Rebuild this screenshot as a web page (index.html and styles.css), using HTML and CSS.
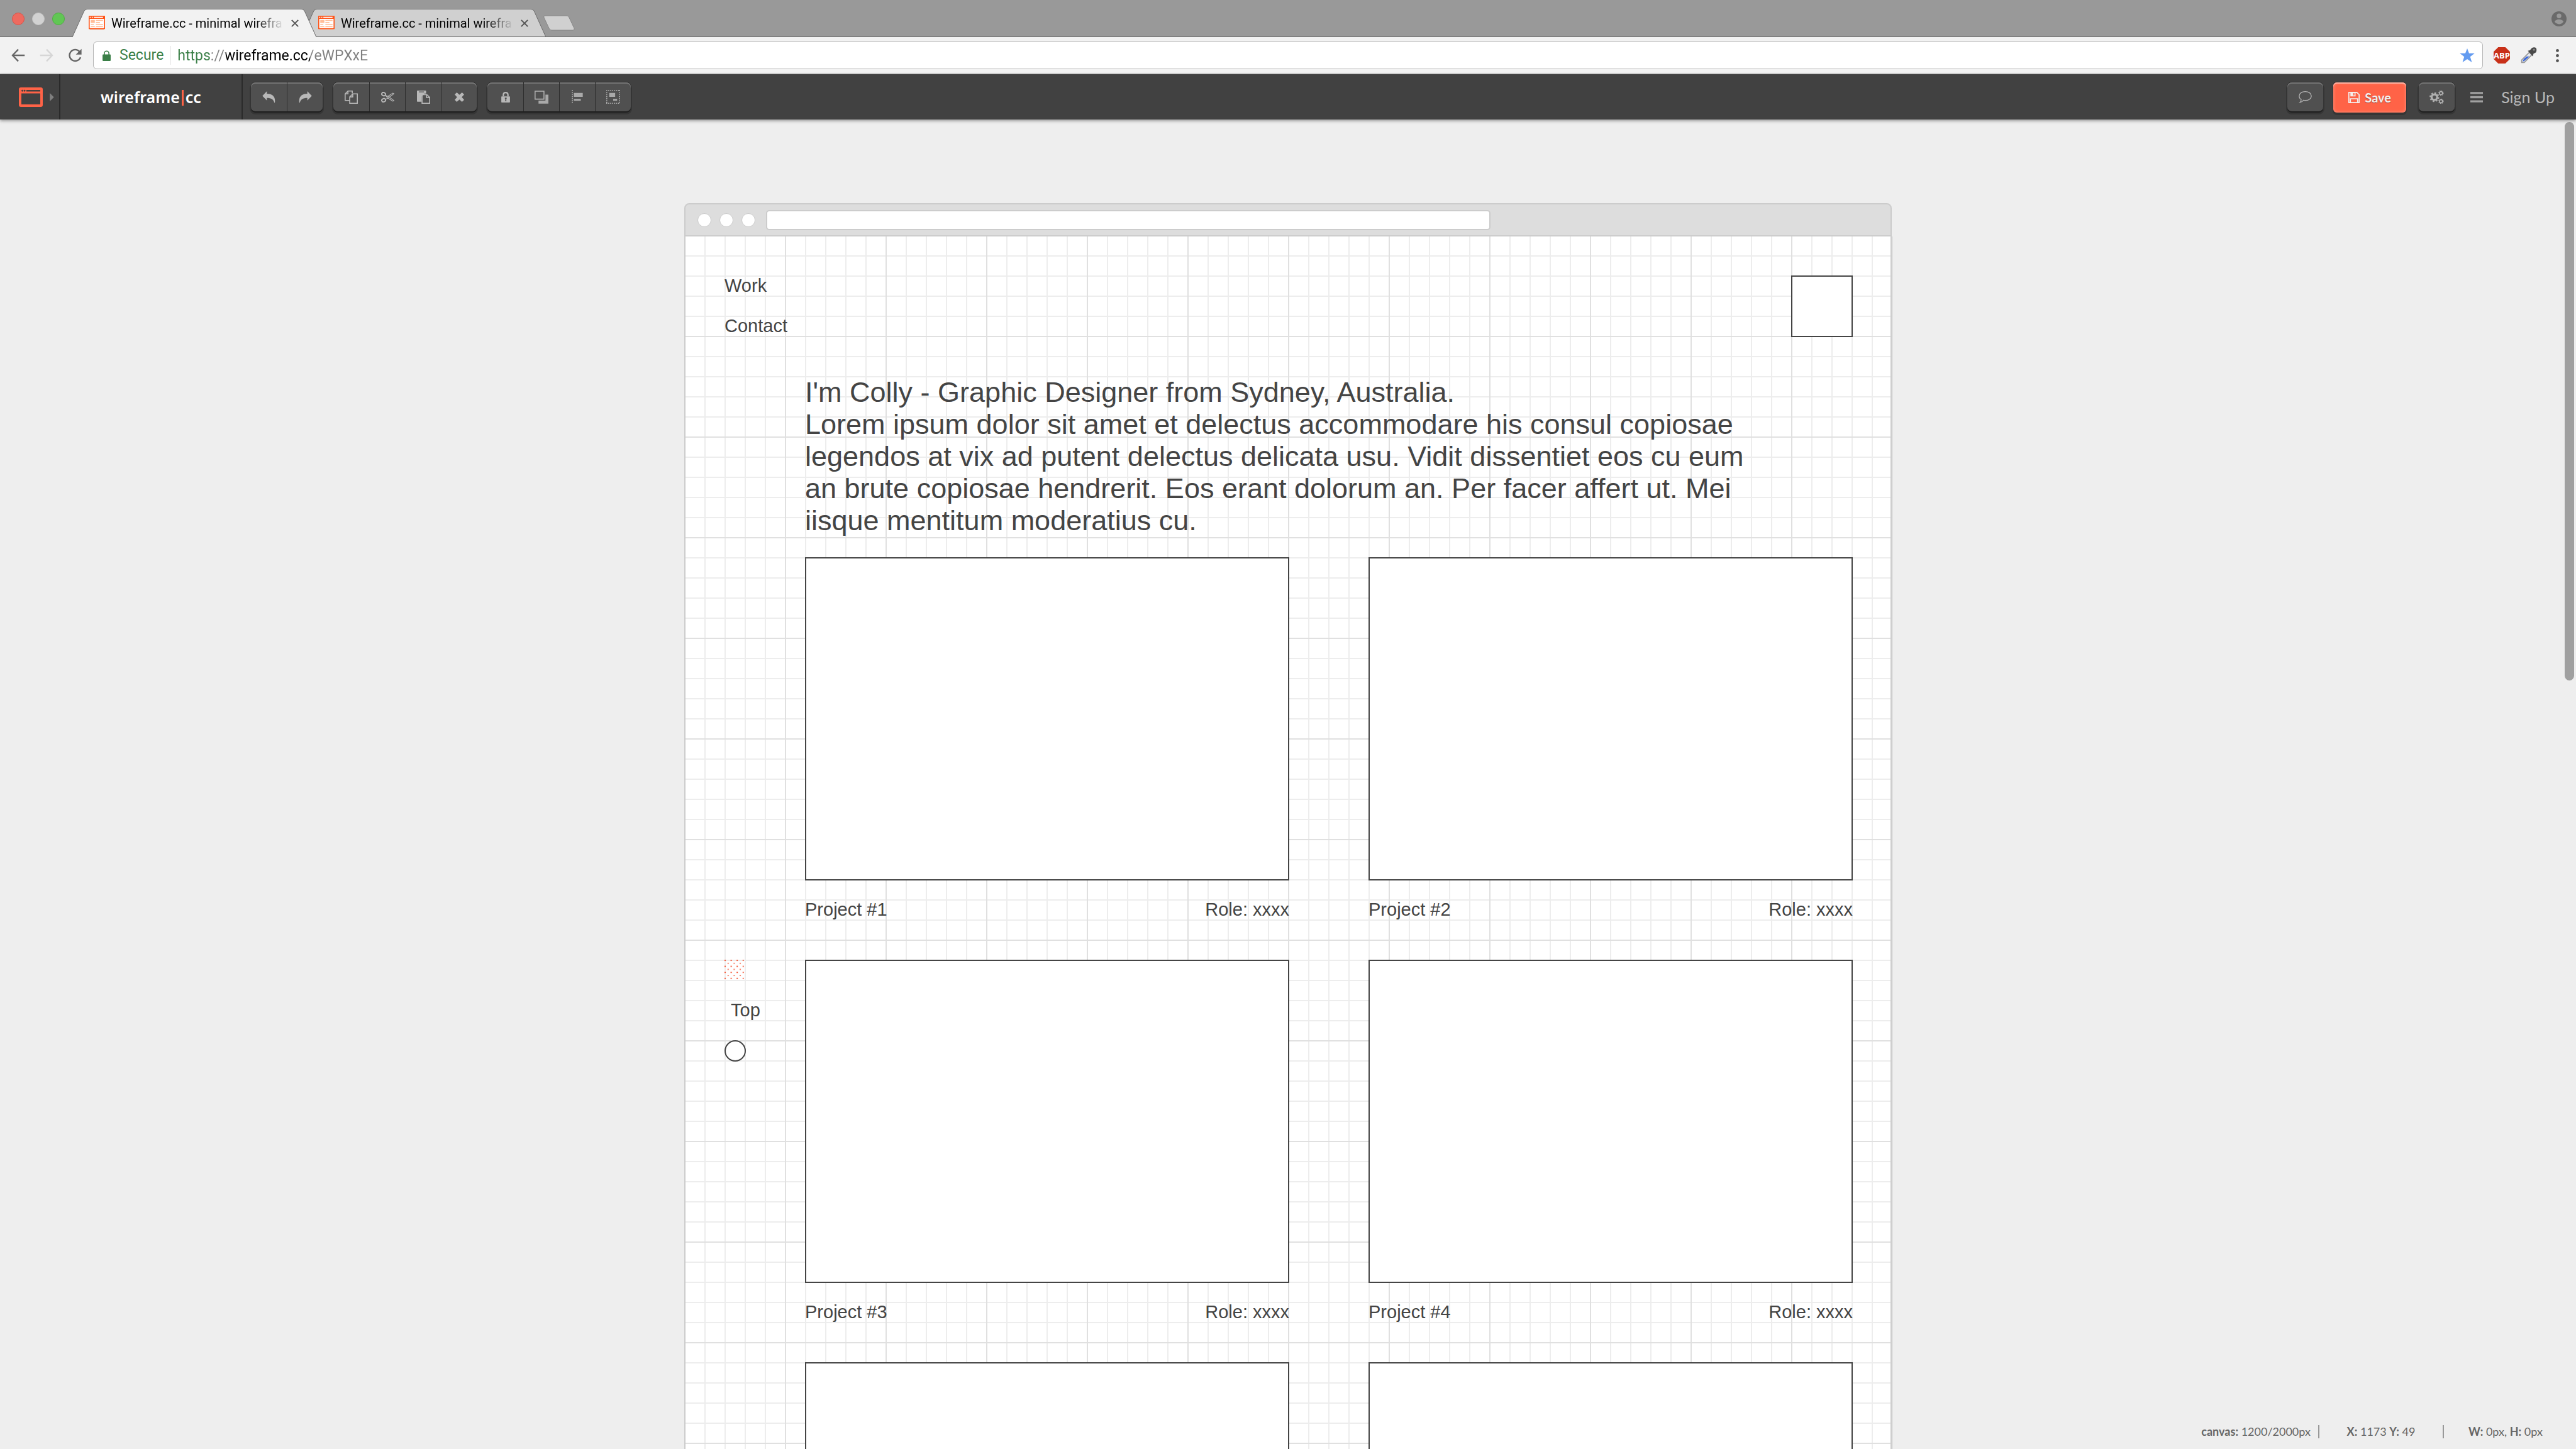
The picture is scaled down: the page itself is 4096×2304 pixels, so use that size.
FILE: index.html
```html
<!DOCTYPE html>
<html lang="en">
<head>
<meta charset="utf-8">
<title>Wireframe.cc</title>
<link rel="stylesheet" href="styles.css">
</head>
<body>
<svg class="defs" aria-hidden="true">
  <symbol id="favicon" viewBox="0 0 32 28">
    <path fill="#e3b9a6" d="M2 26h28v2H2z"/>
    <path fill="#ff5316" d="M0 0h32v26H0z"/>
    <path fill="#fff" d="M2 2h2v2H2zM6 2h2v2H6zM10 2h18v2H10zM2 6h28v18H2z"/>
    <path fill="#ffbd98" d="M4 8h8v6H4zM14 8h14v2H14zM14 12h8v2h-8zM4 16h6v2H4zM14 16h14v2H14zM4 20h8v2H4zM14 20h14v2H14z"/>
  </symbol>
  <symbol id="close" viewBox="0 0 14 14">
    <path d="M1 1l12 12M13 1L1 13" stroke="#555" stroke-width="2.4" fill="none"/>
  </symbol>
</svg>

<header class="browser">
  <div class="tabstrip">
    <div class="lights"><i class="light red"></i><i class="light"></i><i class="light green"></i></div>
    <nav class="tabs">
      <div class="tab active">
        <svg class="tab-shape" viewBox="0 0 388 45" preserveAspectRatio="none"><path d="M0 45L19 3Q21 .5 24 .5H364Q367 .5 369 3L388 45"/></svg>
        <svg class="tab-icon"><use href="#favicon"/></svg>
        <span class="tab-title">Wireframe.cc - minimal wirefra</span>
        <button class="tab-close" aria-label="Close tab"><svg><use href="#close"/></svg></button>
      </div>
      <div class="tab">
        <svg class="tab-shape" viewBox="0 0 388 45" preserveAspectRatio="none"><path d="M0 45L19 3Q21 .5 24 .5H364Q367 .5 369 3L388 45"/></svg>
        <svg class="tab-icon"><use href="#favicon"/></svg>
        <span class="tab-title">Wireframe.cc - minimal wirefra</span>
        <button class="tab-close" aria-label="Close tab"><svg><use href="#close"/></svg></button>
      </div>
      <button class="new-tab" aria-label="New tab"><svg viewBox="0 0 52 26"><path d="M3 1H38Q41 1 42 4L50 21Q51 24 48 24H14Q11 24 10 21L2 4Q1 1 3 1Z" fill="#d0d0d0" stroke="#868686"/></svg></button>
    </nav>
    <button class="profile" aria-label="Profile"><svg viewBox="0 0 30 30"><circle cx="15" cy="15" r="15" fill="#6a6a6a"/><circle cx="15" cy="9" r="4.600" fill="#999"/><path d="M6 20.500Q9 16 15 16T24 20.500Q20 25.500 15 25.500T6 20.500Z" fill="#999"/></svg></button>
  </div>
  <div class="navbar">
    <div class="nav-buttons">
      <button aria-label="Back"><svg viewBox="0 0 28 28"><path d="M27 14H3M14 2L2.500 14L14 26" fill="none" stroke="#666" stroke-width="3"/></svg></button>
      <button aria-label="Forward"><svg viewBox="0 0 28 28"><path d="M1 14H25M14 2L25.500 14L14 26" fill="none" stroke="#d6d6d6" stroke-width="3"/></svg></button>
      <button aria-label="Reload"><svg viewBox="0 0 28 28"><path d="M23.500 6.500A11.500 11.500 0 1 0 25.500 18" fill="none" stroke="#666" stroke-width="3"/><path d="M27.500 1V12.500H16Z" fill="#666"/></svg></button>
    </div>
    <form class="address">
      <svg class="padlock" viewBox="0 0 16 21"><path d="M3.500 9V6a4.500 4.500 0 0 1 9 0V9" fill="none" stroke="#3a7f47" stroke-width="2"/><rect y="8" width="16" height="13" rx="1.500" fill="#3a7f47"/></svg>
      <label class="secure" for="url">Secure</label>
      <input id="url" class="url" type="text" value="https://wireframe.cc/eWPXxE">
      <svg class="star" viewBox="0 0 30 28"><path d="M15 0L18.800 10H30L21 17L24.500 28L15 21.500L5.500 28L9 17L0 10H11.200Z" fill="#639bf0"/></svg>
    </form>
    <div class="extensions">
      <button class="abp"><svg viewBox="0 0 32 32" aria-hidden="true"><path d="M9 0H23L32 9V23L23 32H9L0 23V9Z" fill="#c83018"/></svg><span>ABP</span></button>
      <button aria-label="Color picker"><svg class="dropper" viewBox="0 0 32 32"><path d="M2 30V25L17 10L22 15L7 30Z" fill="#e4e7ee" stroke="#999" stroke-width="2"/><path d="M4 28L6 23L12 18H17L7 27Z" fill="#3864d8"/><path d="M14 7L18 6L22 1.500Q27-1 30.500 2Q32 6 30 10L25 13L24 18Z" fill="#4a4a4a"/><circle cx="26" cy="5" r="2" fill="#8a8a8a"/></svg></button>
      <button aria-label="Menu"><svg class="dots" viewBox="0 0 6 26"><g fill="#555"><circle cx="3" cy="3" r="3"/><circle cx="3" cy="13" r="3"/><circle cx="3" cy="23" r="3"/></g></svg></button>
    </div>
  </div>
</header>

<div class="toolbar">
  <button class="device" aria-label="Choose frame">
    <svg class="device-icon" viewBox="0 0 48 39"><path fill="#ff6347" fill-rule="evenodd" d="M4 0H44Q48 0 48 4V35Q48 39 44 39H4Q0 39 0 35V4Q0 0 4 0ZM5 12V34H43V12ZM15 5V8H43V5Z"/><circle cx="7" cy="6.500" r="1.800" fill="#414141"/><circle cx="11.500" cy="6.500" r="1.800" fill="#414141"/></svg>
    <svg class="device-arrow" viewBox="0 0 8 16"><path d="M0 0L8 8L0 16Z" fill="#808080"/></svg>
  </button>
  <a class="brand" href="#">wireframe<i></i>cc</a>
  <div class="tools">
    <div class="group">
      <button aria-label="Undo"><svg width="21" height="19" viewBox="0 0 26 24"><path d="M0 9.500L9 0V5C19 5 27 10 25 23H24C22 16 18 13.500 9 13.500V18.500Z"/></svg></button>
      <button aria-label="Redo"><svg width="21" height="19" viewBox="0 0 26 24"><path d="M26 9.500L17 0V5C7 5-1 10 1 23H2C4 16 8 13.500 17 13.500V18.500Z"/></svg></button>
    </div>
    <div class="group">
      <button aria-label="Copy"><svg width="21" height="21" viewBox="0 0 26 26"><g fill="none" stroke="#b8b8b8" stroke-width="2"><path d="M10 19.500H1V6.500L6.500 1H15V5.500M6.500 1V6.500H1"/><path d="M16 6.500H25V25H10V12.500ZM16 6.500V12.500H10"/></g></svg></button>
      <button aria-label="Cut"><svg width="21" height="17" viewBox="0 0 26 21"><g fill="none" stroke="#b8b8b8"><ellipse cx="5" cy="4.500" rx="3.800" ry="3.200" transform="rotate(25 5 4.500)" stroke-width="2.400"/><ellipse cx="5" cy="16.500" rx="3.800" ry="3.200" transform="rotate(-25 5 16.500)" stroke-width="2.400"/><path stroke-width="1.400" d="M8 6.500L13 9L23 2.500L25.500 3.500L14 12L8 15M8 6.500L13 12L23 18.500L25.500 17.500L14 9"/></g></svg></button>
      <button aria-label="Paste"><svg width="21" height="21" viewBox="0 0 26 26"><path fill-rule="evenodd" d="M1 0H17Q18 0 18 1V6H15L9 12V22H1Q0 22 0 21V1Q0 0 1 0ZM4 2V3.500H14V2Z"/><path d="M16 8H19.500L25 13.500V25H10V8ZM19 8V14H25" fill="none" stroke="#b8b8b8" stroke-width="2"/></svg></button>
      <button aria-label="Delete"><svg width="15" height="15" viewBox="0 0 18 18"><path d="M4 0L9 4.500L14 0L18 4L13.500 9L18 14L14 18L9 13.500L4 18L0 14L4.500 9L0 4Z"/></svg></button>
    </div>
    <div class="group">
      <button aria-label="Lock"><svg width="14" height="17" viewBox="0 0 17 21"><path d="M4 9V6Q4 1.500 8.500 1.500T13 6V9" fill="none" stroke="#b8b8b8" stroke-width="2.800"/><path fill-rule="evenodd" d="M1 9H16Q17 9 17 10V20Q17 21 16 21H1Q0 21 0 20V10Q0 9 1 9ZM7 11.500V14L8 15V16.500L7 18.500H10.500L9.500 16.500V15L10.500 14V11.500Z"/></svg></button>
      <button aria-label="Arrange"><svg width="22" height="21" viewBox="0 0 28 26"><path d="M22 8H28V26H8V20H22Z" fill="#a9a9a9"/><path d="M1 1H19V17H1Z" fill="none" stroke="#b0b0b0" stroke-width="2"/></svg></button>
      <button aria-label="Align"><svg width="18" height="22" viewBox="0 0 22 28"><path d="M1 0V28" stroke="#b0b0b0" stroke-width="2" stroke-dasharray="2"/><path fill="#a9a9a9" d="M4 6H22V14H4ZM4 18H18V22H4Z"/></svg></button>
      <button aria-label="Group"><svg width="22" height="22" viewBox="0 0 28 28"><path d="M1 0V28M27 0V28M0 1H28M0 27H28" stroke="#b0b0b0" stroke-width="2" stroke-dasharray="2"/><path fill="#a9a9a9" d="M6 6H18V14H6ZM14 18H22V22H14Z"/></svg></button>
    </div>
  </div>
  <div class="actions">
    <div class="group"><button aria-label="Comments"><svg width="21" height="21" viewBox="0 0 26 24"><path d="M13 1C20 1 25 4.800 25 9.700S20 18.500 13 18.500Q11 18.500 9.500 18Q7 21.500 2.500 22.500Q5 20 5 16.500Q1 14 1 9.700C1 4.800 6 1 13 1Z" fill="none" stroke="#b0b0b0" stroke-width="1.600"/></svg></button></div>
    <button class="save"><svg width="18" height="18" viewBox="0 0 22 22"><path d="M1 1H16.500L21 5.500V21H1Z" fill="none" stroke="#f3f0ef" stroke-width="2"/><path fill="#f3f0ef" fill-rule="evenodd" d="M4 1H14V9H4ZM9.500 2V7H12V2Z"/><path d="M4 21V13.500H18V21" fill="none" stroke="#f3f0ef" stroke-width="2"/></svg>Save</button>
    <div class="group"><button aria-label="Settings"><svg width="23" height="21" viewBox="0 0 28 26"><g fill="none" stroke="#b0b0b0"><circle cx="9.500" cy="13" r="5.500" stroke-width="4"/><circle cx="9.500" cy="13" r="8.300" stroke-width="2.600" stroke-dasharray="3.260"/><circle cx="22.500" cy="5" r="3" stroke-width="2"/><circle cx="22.500" cy="5" r="4.400" stroke-width="1.600" stroke-dasharray="1.730"/><circle cx="22.500" cy="21" r="3" stroke-width="2"/><circle cx="22.500" cy="21" r="4.400" stroke-width="1.600" stroke-dasharray="1.730"/></g></svg></button></div>
    <button class="menu" aria-label="Menu"><svg width="20" height="17" viewBox="0 0 24 20"><path d="M0 0H24V4H0ZM0 8H24V12H0ZM0 16H24V20H0Z" fill="#a0a0a0"/></svg></button>
    <a class="signup" href="#">Sign Up</a>
  </div>
</div>

<main class="workspace">
  <section class="frame">
    <div class="frame-bar"><i></i><i></i><i></i><div class="frame-url"></div></div>
    <div class="paper">
      <div class="top-row">
        <nav class="links"><a href="#">Work</a><a href="#">Contact</a></nav>
        <div class="avatar"></div>
      </div>
      <p class="intro">I'm Colly - Graphic Designer from Sydney, Australia.<br>Lorem ipsum dolor sit amet et delectus accommodare his consul copiosae legendos at vix ad putent delectus delicata usu. Vidit dissentiet eos cu eum an brute copiosae hendrerit. Eos erant dolorum an. Per facer affert ut. Mei iisque mentitum moderatius cu.</p>
      <div class="content">
        <aside class="side">
          <svg class="ghost" viewBox="0 0 40 40">
            <defs><pattern id="speck" width="12" height="12" patternUnits="userSpaceOnUse"><path fill="#f4502f" d="M0 0h2.500v2.500H0z"/><path fill="#fb8068" d="M6 6h2.500v2.500H6z"/></pattern></defs>
            <path fill="url(#speck)" d="M0 0h38.500v38.500H0z"/>
          </svg>
          <a class="to-top" href="#">Top</a>
          <div class="ring"></div>
        </aside>
        <div class="projects">
          <figure><div class="thumb"></div><figcaption><span>Project #1</span><span>Role: xxxx</span></figcaption></figure>
          <figure><div class="thumb"></div><figcaption><span>Project #2</span><span>Role: xxxx</span></figcaption></figure>
          <figure><div class="thumb"></div><figcaption><span>Project #3</span><span>Role: xxxx</span></figcaption></figure>
          <figure><div class="thumb"></div><figcaption><span>Project #4</span><span>Role: xxxx</span></figcaption></figure>
          <figure><div class="thumb"></div></figure>
          <figure><div class="thumb"></div></figure>
        </div>
      </div>
    </div>
  </section>
  <div class="scrollbar"></div>
  <div class="status">
    <span><b>canvas:</b> 1200/2000px</span>
    <span><b>X:</b> 1173 <b>Y:</b> 49</span>
    <span><b>W:</b> 0px, <b>H:</b> 0px</span>
  </div>
</main>
</body>
</html>
```

FILE: styles.css
```css
* { box-sizing: border-box; }

html, body { height: 100%; }

body {
  margin: 0;
  display: flex;
  flex-direction: column;
  overflow: hidden;
  background: #eee;
  font-family: Roboto, "Liberation Sans", sans-serif;
}

button {
  margin: 0;
  padding: 0;
  border: 0;
  background: none;
  font: inherit;
  display: flex;
  align-items: center;
  justify-content: center;
}

a { color: inherit; text-decoration: none; }
svg { display: block; flex: none; }
.defs { position: absolute; width: 0; height: 0; }

/* Browser chrome */
.browser { flex: none; }

.tabstrip {
  height: 59px;
  display: flex;
  align-items: flex-end;
  background: #999;
  box-shadow: inset 0 -1px #6c6c6c;
  padding: 0 15px 0 19px;
}

.lights { display: flex; gap: 12px; width: 96px; flex: none; align-self: center; }
.light { width: 20px; height: 20px; border-radius: 50%; background: #d2d2d2; border: 1px solid #c4c4c4; }
.red { background: #ee6a5f; border-color: #d5574c; }
.green { background: #61c654; border-color: #4fae43; }

.tabs { display: flex; align-items: flex-end; flex: 1; }

.tab {
  position: relative;
  z-index: 0;
  width: 388px;
  height: 45px;
  display: flex;
  align-items: center;
  padding: 0 28px 0 26px;
}
.tab + .tab { margin-left: -23px; }
.tab.active { z-index: 1; }
.tab-shape { position: absolute; left: 0; top: 0; width: 100%; height: 100%; fill: #d0d0d0; stroke: #6c6c6c; z-index: -1; }
.active .tab-shape { fill: #f2f2f2; }
.tab:not(.active)::after { content: ""; position: absolute; left: 22px; right: 0; bottom: 0; height: 1px; background: #6c6c6c; }
.tab-icon { width: 26px; height: 23px; }
.tab-title {
  flex: 1;
  margin: 0 11px 0 10px;
  overflow: hidden;
  white-space: nowrap;
  font-size: 20px;
  line-height: 24px;
  color: #000;
  -webkit-mask-image: linear-gradient(to left, transparent, #000 46px);
  mask-image: linear-gradient(to left, transparent, #000 46px);
}
.tab-close svg { width: 12px; height: 12px; }
.new-tab { align-self: center; margin-left: -5px; }
.new-tab svg { width: 52px; height: 26px; }
.profile { align-self: center; }
.profile svg { width: 24px; height: 24px; }

.navbar {
  height: 59px;
  display: flex;
  align-items: center;
  padding: 0 27px 0 18px;
  background: #f2f2f2;
  border-bottom: 1px solid #a8a8a8;
}
.nav-buttons { display: flex; gap: 23px; width: 130px; }
.nav-buttons svg { width: 22px; height: 22px; }
.address {
  flex: 1;
  height: 44px;
  display: flex;
  align-items: center;
  padding: 0 12px 0 14px;
  background: #fff;
  border: 1px solid #b5b5b5;
  border-radius: 6px;
}
.padlock { width: 13px; height: 17px; }
.secure { margin: 0 11px 0 14px; font-size: 23px; line-height: 28px; color: #3a7f47; }
.url {
  flex: 1;
  height: 30px;
  border: 0;
  border-left: 1px solid #e4e4e4;
  padding: 0 0 0 10px;
  outline: 0;
  font-family: inherit;
  font-size: 23px;
  color: transparent;
  background: linear-gradient(to right, #3a7f47 62px, #808080 62px 87px, #000 87px 221px, #808080 221px);
  -webkit-background-clip: text;
  background-clip: text;
}
.star { width: 24px; height: 22px; }
.extensions { display: flex; align-items: center; gap: 17px; margin-left: 17px; }
.extensions .dots { width: 5px; height: 21px; margin-left: 13px; }
.dropper { width: 26px; height: 26px; }
.abp { position: relative; }
.abp svg { width: 26px; height: 26px; }
.abp span { position: absolute; inset: 0; font: 700 13px/26px "Open Sans", sans-serif; color: #fff; text-align: center; }

/* Application toolbar */
.toolbar {
  flex: none;
  position: relative;
  z-index: 1;
  height: 72px;
  display: flex;
  background: #414141;
  box-shadow: 0 2px 5px rgba(0, 0, 0, .4);
  font-family: Lato, "Open Sans", sans-serif;
}
.device { width: 96px; gap: 11px; padding: 0 7px 0 28px; border-right: 2px solid #2a2a2a; }
.device-icon { width: 38px; height: 31px; }
.device-arrow { width: 7px; height: 13px; }
.brand {
  width: 290px;
  display: flex;
  align-items: center;
  justify-content: center;
  border-right: 2px solid #2a2a2a;
  font: 600 25px/34px "Noto Sans", sans-serif;
  color: #fff;
}
.brand i { width: 3px; height: 25px; margin: 3px 3px 0; background: #ff6347; }
.tools { display: flex; gap: 17px; padding: 13px; flex: 1; }
.group {
  display: flex;
  height: 46px;
  border-radius: 7px;
  background: #505050;
  box-shadow: 0 -1px #282828, 0 2px #1f1f1f, 0 3px 0 2px #353535;
}
.group button { width: 57px; height: 46px; fill: #b8b8b8; box-shadow: inset 0 2px #777; }
.group button + button { border-left: 1px solid #2e2e2e; }
.group button:first-child { border-radius: 7px 0 0 7px; }
.group button:last-child { border-radius: 0 7px 7px 0; }
.group button:only-child { border-radius: 7px; }
.actions { display: flex; align-items: flex-start; padding: 13px 34px 0 0; }
.save {
  width: 116px;
  height: 48px;
  gap: 8px;
  margin: 0 20px 0 16px;
  border-radius: 6px;
  background: #ff6347;
  box-shadow: inset 0 2px #ffb3a4, inset 0 0 5px #ff9a86, 0 -1px #282828, 0 3px 0 1px #353535;
  color: #f3f0ef;
  font-size: 20px;
  font-weight: 700;
  text-shadow: 0 1px 1px rgba(0, 0, 0, .4);
}
.menu { height: 46px; margin: 0 29px 0 25px; }
.signup { font-size: 25px; line-height: 46px; color: #b8b8b8; }

/* Workspace */
.workspace { position: relative; flex: 1; min-height: 0; overflow: hidden; padding-top: 133px; }
.frame { width: 100%; max-width: 1920px; margin: 0 auto; font-family: "Liberation Sans", Arial, sans-serif; color: #444; }
.frame-bar {
  height: 53px;
  display: flex;
  align-items: center;
  gap: 13px;
  padding: 0 19px;
  background: #ddd;
  border: 2px solid #ccc;
  border-radius: 8px 8px 0 0;
}
.frame-bar i { width: 22px; height: 22px; border-radius: 50%; border: 1px solid #ccc; background: #fff; }
.frame-url { width: 1152px; height: 32px; margin-left: 4px; border: 2px solid #ccc; border-radius: 5px; background: #fff; }

.paper {
  min-height: 2400px;
  padding: 62px 60px 0 62px;
  border: solid #ccc;
  border-width: 0 2px;
  box-shadow: 2px 0 #e0e0e0;
  background-color: #fff;
  background-image:
    linear-gradient(#e0e0e0 2px, transparent 2px),
    linear-gradient(to right, #e0e0e0 2px, transparent 2px),
    linear-gradient(#ededed 2px, transparent 2px),
    linear-gradient(to right, #ededed 2px, transparent 2px);
  background-size: 160px 160px, 160px 160px, 32px 32px, 32px 32px;
  background-position: -2px -2px;
}
.top-row { display: flex; justify-content: space-between; align-items: flex-start; }
.links { display: flex; flex-direction: column; gap: 32px; font-size: 29px; line-height: 32px; }
.avatar { width: 98px; height: 98px; border: 2px solid #444; background: #fff; }
.intro { max-width: 1664px; margin: 62px 0 33px; padding-left: 128px; font-size: 45px; line-height: 51px; }
.content { display: grid; grid-template-columns: 128px 1fr; }
.side { display: flex; flex-direction: column; gap: 32px; padding-top: 640px; font-size: 29px; line-height: 32px; }
.ghost { width: 32px; height: 32px; }
.to-top { padding-left: 10px; }
.ring { width: 34px; height: 34px; border: 2px solid #444; border-radius: 50%; background: #fff; }
.projects { display: grid; grid-template-columns: 1fr 1fr; gap: 64px 126px; }
figure { margin: 0; }
.thumb { height: 514px; border: 2px solid #444; background: #fff; }
figcaption { display: flex; justify-content: space-between; margin-top: 30px; font-size: 29px; line-height: 32px; }

.scrollbar { position: absolute; top: 4px; right: 3px; width: 15px; height: 42%; border-radius: 8px; background: #a0a0a0; }

.status {
  position: absolute;
  right: 14px;
  bottom: 17px;
  display: flex;
  font: 18px/21px Lato, sans-serif;
  color: #666;
  text-align: center;
}
.status span { width: 198px; }
.status span:first-child { width: auto; padding-right: 12px; }
.status span + span { border-left: 2px solid #999; }
```
